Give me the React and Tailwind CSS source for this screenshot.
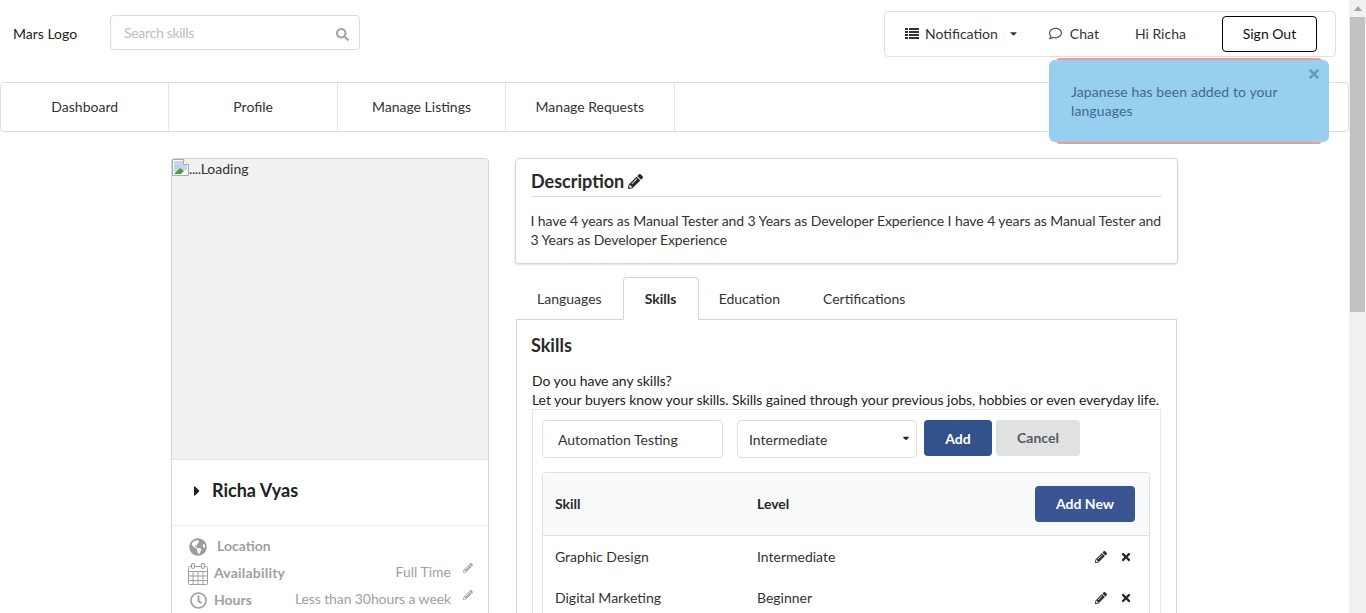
import React from "react";
import { FaPencilAlt, FaTimes, FaGlobeAmericas, FaRegClock, FaRegComment, FaSearch, FaCaretRight, FaCaretDown } from "react-icons/fa";

const navItems = ["Dashboard", "Profile", "Manage Listings", "Manage Requests"];

function Tab({ children, active, className = "" }) {
  return active ? (
    <div className="w-[76px] h-[43px] -mb-px flex items-center justify-center border border-[#d4d4d5] border-b-white bg-white rounded-t-[4px] font-bold text-[#292929] z-10">{children}</div>
  ) : (
    <div className={`px-[21px] h-[42px] flex items-center text-[#333] ${className}`}>{children}</div>
  );
}

function CalendarIcon() {
  return (
    <svg width="20" height="22" viewBox="0 0 20 22" fill="none" stroke="#a0a0a0" strokeWidth="1">
      <rect x="0.5" y="3.5" width="19" height="18" rx="1" />
      <path d="M0.5 8.5h19M0.5 13h19M0.5 17.5h19M5 8.5v13M10 8.5v13M15 8.5v13" />
      <rect x="3.5" y="0.5" width="3" height="5" rx="1.5" fill="#fff" strokeWidth="1.2" />
      <rect x="13.5" y="0.5" width="3" height="5" rx="1.5" fill="#fff" strokeWidth="1.2" />
    </svg>
  );
}

function ListIcon() {
  return (
    <svg width="14" height="11" viewBox="0 0 14 11" fill="#333" className="ml-[20px]">
      <path d="M0 0h3v2H0zM4 0h10v2H4zM0 3h3v2H0zM4 3h10v2H4zM0 6h3v2H0zM4 6h10v2H4zM0 9h3v2H0zM4 9h10v2H4z" />
    </svg>
  );
}

function InfoRow({ icon, label, value, labelClass }) {
  return (
    <div className="flex items-center h-[27px] text-[#a0a0a0] text-[14px]">
      <span className="w-[26px] flex justify-center shrink-0">{icon}</span>
      <span className={`font-bold -mt-[2px] ${labelClass}`}>{label}</span>
      {value && <span className="ml-auto mr-[12px] -mt-[4px]">{value}</span>}
      {value && <FaPencilAlt className="text-[10px] text-[#a8a8a8] mr-[15px] -mt-[11px]" />}
    </div>
  );
}

function SkillRow({ name, level, h }) {
  return (
    <div className={`flex items-center text-[14px] text-[#333] ${h}`}>
      <span className="w-[202px] ml-[12px]">{name}</span>
      <span>{level}</span>
      <FaPencilAlt className="ml-auto text-[12px] text-[#333]" />
      <FaTimes className="ml-[13px] mr-[17px] text-[12px] text-[#222]" />
    </div>
  );
}

export default function App() {
  return (
    <div className="relative flex h-[613px] w-[1366px] overflow-hidden bg-white text-[14px] leading-[19px] text-[#333]" style={{ fontFamily: "Lato, 'Open Sans', sans-serif" }}>
      <div className="w-[1349px] shrink-0">
        <header className="flex items-start h-[82px] pt-[11px]">
          <div className="ml-[13px] w-[97px] h-[46px] pb-[2px] flex items-center text-[#222]">Mars Logo</div>
          <div className="mt-[4px] w-[250px] h-[35px] border border-[#dcdcdc] rounded-[4px] flex items-center pl-[13px] pr-[10px] text-[#bdbdbd]">
            <span className="tracking-[-0.3px]">Search skills</span>
            <FaSearch className="ml-auto mt-[3px] text-[13px] text-[#a5a5a5]" />
          </div>
          <div className="ml-auto mr-[13px] w-[452px] h-[46px] pb-[2px] border border-[#e0e0e0] rounded-[4px] flex items-center text-[#333]">
            <ListIcon />
            <span className="ml-[6px]">Notification</span>
            <FaCaretDown className="ml-[10px] text-[11px] text-[#333]" />
            <FaRegComment className="ml-[30px] text-[13px] text-[#555]" />
            <span className="ml-[8px]">Chat</span>
            <span className="ml-[36px]">Hi Richa</span>
            <div className="ml-[36px] mt-[2px] w-[95px] h-[36px] pb-[2px] border border-black rounded-[4px] flex items-center justify-center text-[#111]">Sign Out</div>
          </div>
        </header>

        <nav className="h-[50px] border border-[#dedede] rounded-[4px] flex">
          {navItems.map((t) => (
            <div key={t} className="w-[168.4px] pb-[2px] flex items-center justify-center border-r border-[#e6e6e6] text-[#333]">{t}</div>
          ))}
        </nav>

        <main className="flex items-start gap-[26px] ml-[171px] mt-[26px]">
          <aside className="w-[318px] shrink-0 border border-[#d4d4d5] rounded-t-[4px]">
            <div className="h-[301px] bg-[#f1f1f1] flex items-start border-b border-[#e6e6e6] rounded-t-[4px]">
              <svg width="17" height="17" viewBox="0 0 17 17" className="shrink-0">
                <path d="M0.5 0.5h11l5 5v11h-16z" fill="#fff" stroke="#a9a9a9" />
                <path d="M2 2h9v4h4v5L2 13z" fill="#c3d4f0" />
                <path d="M2 15l6-6 4 3-3 3z" fill="#4f9a3a" />
                <path d="M11.5 0.5v5h5" fill="#fff" stroke="#a9a9a9" />
              </svg>
              <span className="text-[#333]"><span className="tracking-[-0.4px]">....</span>Loading</span>
            </div>
            <div className="h-[66px] pb-[4px] flex items-center border-b border-[#eeeeee] pl-[17px]">
              <FaCaretRight className="text-[16px] text-[#222]" />
              <span className="ml-[7px] text-[18px] font-bold text-[#222]">Richa Vyas</span>
            </div>
            <div className="pl-[13px] pt-[7px]">
              <InfoRow icon={<FaGlobeAmericas className="text-[18px] text-[#9c9c9c]" />} label="Location" labelClass="ml-[6px]" />
              <InfoRow icon={<CalendarIcon />} label="Availability" labelClass="ml-[3px] tracking-[0.2px]" value="Full Time" />
              <InfoRow icon={<FaRegClock className="text-[17px] text-[#9c9c9c]" />} label="Hours" labelClass="ml-[3px]" value={<span className="tracking-[-0.1px]">Less than 30hours a week</span>} />
            </div>
          </aside>

          <section className="w-[663px] shrink-0">
            <div className="h-[106px] border border-[#d4d4d5] rounded-[4px] shadow-[0_1px_2px_rgba(34,36,38,0.15)] px-[15px] pt-[9px]">
              <div className="flex items-center h-[27px] border-b border-[#dedede] pb-[1px] box-content">
                <span className="text-[18px] font-bold text-[#292929]">Description</span>
                <FaPencilAlt className="ml-[4px] text-[15px] text-[#292929]" />
              </div>
              <p className="mt-[14px] -ml-[0.5px] -mr-[1px] text-[#333] tracking-[-0.08px]">I have 4 years as Manual Tester and 3 Years as Developer Experience I have 4 years as Manual Tester and 3 Years as Developer Experience</p>
            </div>

            <div className="mt-[13px] flex items-end ml-[1px]">
              <Tab>Languages</Tab>
              <Tab active>Skills</Tab>
              <Tab className="-ml-[1px]">Education</Tab>
              <Tab className="ml-[1px]">Certifications</Tab>
            </div>

            <div className="ml-[1px] w-[661px] h-[400px] border border-[#d4d4d5] px-[15px]">
              <h3 className="mt-[14px] -ml-[1px] text-[18px] leading-[23px] font-bold text-[#292929]">Skills</h3>
              <p className="mt-[14px] text-[#222] tracking-[-0.06px] whitespace-nowrap">Do you have any skills?<br />Let your buyers know your skills. Skills gained through your previous jobs, hobbies or even everyday life.</p>
              <div className="border border-[#e8e8e8] h-[300px] pl-[9px] pr-[10px] pt-[10px]">
                <div className="flex items-start">
                  <div className="w-[181px] h-[38px] border border-[#dedede] rounded-[4px] flex items-center pl-[15px] text-[#333]">Automation Testing</div>
                  <div className="ml-[14px] w-[180px] h-[38px] border border-[#dedede] rounded-[4px] flex items-center pl-[11px] pr-[5px] text-[#333]">
                    Intermediate
                    <FaCaretDown className="ml-auto text-[10px] text-[#222] -mt-[3px]" />
                  </div>
                  <div className="ml-[7px] w-[68px] h-[36px] bg-[#33528c] rounded-[4px] flex items-center justify-center font-bold text-white">Add</div>
                  <div className="ml-[4px] w-[84px] h-[36px] pb-[2px] bg-[#e0e1e2] rounded-[4px] flex items-center justify-center font-bold text-[#5a5a5a]">Cancel</div>
                </div>
                <div className="mt-[14px] border border-[#e1e1e1] rounded-t-[4px] h-[200px]">
                  <div className="h-[63px] bg-[#f9fafb] border-b border-[#e1e1e1] flex items-center font-bold text-[#292929] rounded-t-[4px]">
                    <span className="w-[202px] ml-[12px] -mt-[2px]">Skill</span>
                    <span className="-mt-[2px]">Level</span>
                    <div className="ml-auto mr-[14px] w-[100px] h-[36px] pb-[2px] bg-[#3a5592] rounded-[4px] flex items-center justify-center text-white">Add New</div>
                  </div>
                  <SkillRow name="Graphic Design" level="Intermediate" h="h-[41px]" />
                  <SkillRow name="Digital Marketing" level="Beginner" h="h-[41px]" />
                </div>
              </div>
            </div>
          </section>
        </main>
      </div>

      <div className="w-[17px] h-full bg-[#f1f1f1] flex flex-col items-center shrink-0">
        <div className="h-[17px] flex items-center justify-center">
          <svg width="8" height="5" viewBox="0 0 8 5"><path d="M4 0l4 5H0z" fill="#a3a3a3" /></svg>
        </div>
        <div className="w-[15px] h-[295px] bg-[#c1c1c1]" />
      </div>

      <div className="absolute left-[1056px] top-[58px] w-[266px] h-[86px] bg-[#f29a94] rounded-[4px]" />
      <div className="absolute left-[1049px] top-[60px] w-[280px] h-[82px] bg-[#97cfef] rounded-[6px] pl-[22px] pr-[40px] pt-[22px] text-[#3f6b8c] tracking-[0.1px]">
        Japanese has been added to your languages
        <FaTimes className="absolute right-[8px] top-[7px] text-[14px] text-[#5c9cc4]" />
      </div>
    </div>
  );
}
